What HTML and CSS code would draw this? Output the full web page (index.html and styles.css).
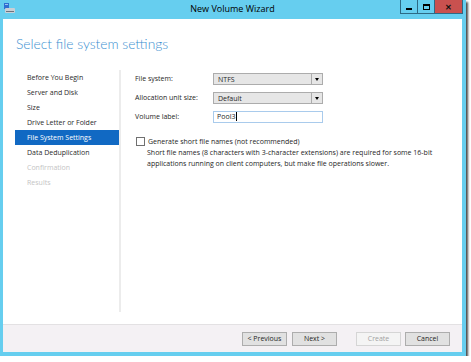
FILE: index.html
```html
<!DOCTYPE html>
<html lang="en">
<head>
  <meta charset="UTF-8">
  <title>New Volume Wizard</title>
  <link rel="stylesheet" href="styles.css">
</head>
<body>
  <div class="window">
    <div class="titlebar">
      <svg class="app-icon" width="11" height="11" viewBox="0 0 11 11">
        <rect x="0" y="0" width="5" height="6" fill="#2f6fd0"/>
        <rect x="1" y="1" width="3" height="1" fill="#9cc4f2"/>
        <rect x="1" y="5" width="10" height="5" rx="1" fill="#c9cfd6"/>
        <rect x="2" y="8" width="8" height="1" fill="#6a7480"/>
      </svg>
      <div class="title">New Volume Wizard</div>
      <div class="caption-buttons">
        <div class="cap-btn"><span class="ico-min"></span></div>
        <div class="cap-btn"><span class="ico-max"></span></div>
        <div class="cap-btn close">&#x2715;</div>
      </div>
    </div>

    <div class="client">
      <div class="header">
        <h1>Select file system settings</h1>
      </div>

      <div class="main">
        <ul class="steps">
          <li>Before You Begin</li>
          <li>Server and Disk</li>
          <li>Size</li>
          <li>Drive Letter or Folder</li>
          <li class="active">File System Settings</li>
          <li>Data Deduplication</li>
          <li class="disabled">Confirmation</li>
          <li class="disabled">Results</li>
        </ul>

        <div class="page">
          <div class="form">
            <label>File system:</label>
            <div class="combo"><span>NTFS</span><span class="combo-btn"></span></div>

            <label>Allocation unit size:</label>
            <div class="combo"><span>Default</span><span class="combo-btn"></span></div>

            <label>Volume label:</label>
            <div class="textbox"><span class="caret">Pool3</span></div>
          </div>

          <div class="check-row">
            <span class="checkbox"></span>
            <span>Generate short file names (not recommended)</span>
          </div>
          <p class="note">Short file names (8 characters with 3-character extensions) are required for some 16-bit applications running on client computers, but make file operations slower.</p>
        </div>
      </div>

      <div class="footer">
        <button>&lt; Previous</button>
        <button>Next &gt;</button>
        <button class="create" disabled>Create</button>
        <button>Cancel</button>
      </div>
    </div>
  </div>
</body>
</html>
```

FILE: styles.css
```css
body {
  margin: 0;
  background: #fff;
  font-family: "Open Sans", "Noto Sans", sans-serif;
  color: #1e1e1e;
}
.window {
  width: 466px;
  height: 356px;
  box-sizing: border-box;
  padding: 0 4px 4px 3px;
  background: #66ceef;
  display: flex;
  flex-direction: column;
  box-shadow: 2px 2px 2px rgba(0, 0, 0, 0.7);
}
.titlebar {
  height: 19px;
  display: flex;
  align-items: flex-start;
  position: relative;
}
.app-icon {
  margin: 3px 0 0 1px;
}
.title {
  position: absolute;
  left: 0;
  right: 0;
  top: 3px;
  text-align: center;
  font-size: 9px;
  line-height: 12px;
  color: #000;
}
.caption-buttons {
  margin-left: auto;
  margin-right: -1px;
  display: flex;
  position: relative;
}
.cap-btn {
  width: 16px;
  height: 13px;
  border: 1px solid #2d6a85;
  border-top: none;
  margin-left: -1px;
  display: flex;
  align-items: center;
  justify-content: center;
}
.cap-btn.close {
  width: 27px;
  background: #c9514f;
  color: #111;
  font-size: 8px;
  font-weight: bold;
  line-height: 12px;
}
.ico-min {
  width: 6px;
  height: 2px;
  background: #000;
  margin-top: 4px;
}
.ico-max {
  width: 5px;
  height: 3px;
  border: 1px solid #000;
  border-top-width: 2px;
}
.client {
  flex: 1;
  background: #fff;
  display: flex;
  flex-direction: column;
}
.header {
  height: 51px;
  box-sizing: border-box;
  padding: 15px 0 0 13px;
}
.header h1 {
  margin: 0;
  font-family: Lato, "Open Sans", sans-serif;
  font-size: 13.8px;
  line-height: 19px;
  font-weight: 300;
  color: #3b8fd0;
}
.main {
  flex: 1;
  display: flex;
}
.steps {
  list-style: none;
  margin: 0 0 12px 12px;
  padding: 0;
  width: 104px;
  border-right: 2px solid #ececec;
  font-size: 7px;
}
.steps li {
  height: 15px;
  line-height: 15px;
  padding-left: 12px;
  color: #2a2a2a;
}
.steps li.active {
  background: #1169c3;
  color: #fff;
}
.steps li.disabled {
  color: #c4c4c4;
}
.page {
  flex: 1;
  padding: 3px 0 0 14px;
  font-size: 7px;
}
.form {
  display: grid;
  grid-template-columns: 78px 110px;
  grid-auto-rows: 12px;
  row-gap: 7px;
  align-items: center;
}
.form label {
  line-height: 12px;
}
.combo {
  height: 12px;
  box-sizing: border-box;
  border: 1px solid #acacac;
  background: #e6e6e6;
  display: flex;
  align-items: center;
  padding-left: 4px;
}
.combo span:first-child {
  flex: 1;
}
.combo-btn {
  width: 10px;
  height: 10px;
  border-left: 1px solid #acacac;
  position: relative;
}
.combo-btn::after {
  content: "";
  position: absolute;
  left: 3px;
  top: 4px;
  border-left: 2px solid transparent;
  border-right: 2px solid transparent;
  border-top: 3px solid #000;
}
.textbox {
  height: 12px;
  box-sizing: border-box;
  border: 1px solid #a9cbec;
  padding-left: 3px;
  line-height: 10px;
}
.caret {
  border-right: 1px solid #000;
  padding-right: 1px;
}
.check-row {
  margin-top: 13px;
  display: flex;
  align-items: center;
  gap: 3px;
  line-height: 11px;
  margin-left: 1px;
}
.checkbox {
  width: 9px;
  height: 9px;
  box-sizing: border-box;
  border: 1px solid #707070;
  background: #fff;
}
.note {
  margin: 0 0 0 12px;
  line-height: 11px;
  width: 300px;
}
.footer {
  height: 28px;
  box-sizing: border-box;
  border-top: 1px solid #e3e1e3;
  background: #f4f1f4;
  display: flex;
  align-items: center;
  justify-content: flex-end;
  padding-right: 12px;
}
.footer button {
  width: 45px;
  height: 14px;
  padding: 0;
  margin-left: 5px;
  border: 1px solid #adadad;
  background: #e1e1e1;
  font-family: inherit;
  font-size: 7px;
  color: #1e1e1e;
}
.footer button.create {
  margin-left: 19px;
  background: #f4f4f4;
  border-color: #d5d5d5;
  color: #a2a2a2;
}
.footer button.create + button {
  margin-left: 4px;
}
```
